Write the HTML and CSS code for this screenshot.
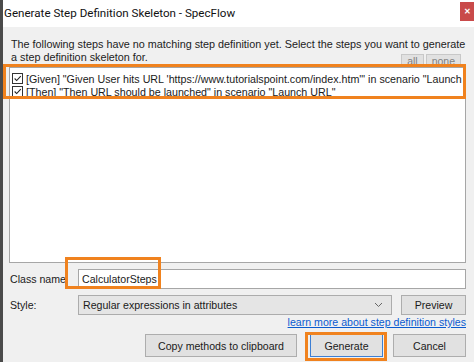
FILE: index.html
```html
<!DOCTYPE html>
<html>
<head>
<meta charset="utf-8">
<link rel="stylesheet" href="styles.css">
</head>
<body>
<div class="window">
  <div class="titlebar">
    <span class="title">Generate Step Definition Skeleton - SpecFlow</span>
    <span class="close">&#x2715;</span>
  </div>
  <div class="content">
    <p class="desc">The following steps have no matching step definition yet. Select the steps you want to generate<br>a step definition skeleton for.</p>
    <div class="selectors">
      <span class="mini-btn">all</span>
      <span class="mini-btn">none</span>
    </div>
    <div class="list-wrap">
      <div class="list">
        <div class="item"><span class="check"><svg viewBox="0 0 11 11" width="11" height="11"><path d="M2 5.5 L4.5 8 L9.5 2.5" fill="none" stroke="#222" stroke-width="1.3"/></svg></span><span>[Given] "Given User hits URL 'https://www.tutorialspoint.com/index.htm'" in scenario "Launch</span></div>
        <div class="item"><span class="check"><svg viewBox="0 0 11 11" width="11" height="11"><path d="M2 5.5 L4.5 8 L9.5 2.5" fill="none" stroke="#222" stroke-width="1.3"/></svg></span><span>[Then] "Then URL should be launched" in scenario "Launch URL"</span></div>
      </div>
      <div class="hl hl-list"></div>
    </div>
    <div class="row row-class">
      <label class="lbl">Class name</label>
      <div class="input">CalculatorSteps</div>
      <div class="hl hl-class"></div>
    </div>
    <div class="row row-style">
      <label class="lbl">Style:</label>
      <div class="combo"><span>Regular expressions in attributes</span><svg class="chev" viewBox="0 0 9 6" width="9" height="6"><path d="M1 1 L4.5 4.5 L8 1" fill="none" stroke="#666" stroke-width="1"/></svg></div>
      <div class="btn btn-preview">Preview</div>
    </div>
    <div class="link-row"><a class="link">learn more about step definition styles</a></div>
    <div class="actions">
      <div class="btn btn-copy">Copy methods to clipboard</div>
      <div class="gen-wrap">
        <div class="btn btn-gen">Generate</div>
        <div class="hl hl-gen"></div>
      </div>
      <div class="btn btn-cancel">Cancel</div>
    </div>
  </div>
</div>
</body>
</html>
```
FILE: styles.css
```css
* { box-sizing: border-box; }
html, body { margin: 0; padding: 0; }
body {
  width: 474px;
  height: 362px;
  overflow: hidden;
  font-family: "Liberation Sans", Arial, sans-serif;
  font-size: 10.6px;
  color: #1a1a1a;
  background: #f0f0f0;
}
.window {
  width: 474px;
  height: 362px;
  border-left: 3px solid #4b4b4b;
  display: flex;
  flex-direction: column;
}
.titlebar {
  height: 27px;
  background: #ffffff;
  display: flex;
  align-items: center;
  justify-content: space-between;
  padding-left: 1px;
}
.title {
  font-family: Roboto, "Noto Sans", sans-serif;
  font-size: 11.6px;
  color: #111;
  margin-top: -1px;
}
.close {
  width: 14px;
  height: 19px;
  margin-bottom: 4px;
  background: #c94a4a;
  color: #fff;
  font-size: 8px;
  display: flex;
  align-items: center;
  justify-content: center;
  font-weight: bold;
}
.content {
  flex: 1;
  background: #f0f0f0;
  padding: 11px 8px 0 6px;
  display: flex;
  flex-direction: column;
}
.desc {
  margin: 0;
  padding-left: 2px;
  line-height: 13px;
  color: #222;
  white-space: nowrap;
  font-size: 10.8px;
}
.selectors {
  display: flex;
  justify-content: flex-end;
  gap: 2px;
  margin-top: -10px;
  padding-right: 5px;
  height: 13px;
}
.mini-btn {
  display: block;
  height: 13px;
  padding: 0 5px;
  line-height: 13px;
  background: #e1e1e1;
  border: 1px solid #c8c8c8;
  border-bottom: none;
  color: #808080;
  font-size: 10.5px;
}
.list-wrap {
  position: relative;
}
.list {
  height: 196px;
  background: #ffffff;
  border: 1px solid #a6a6a6;
  padding: 4px 0 0 2px;
}
.item {
  display: flex;
  align-items: center;
  height: 13px;
  white-space: nowrap;
  overflow: hidden;
  color: #1a1a1a;
  font-size: 10.7px;
}
.check {
  width: 11px;
  height: 11px;
  border: 1px solid #333;
  background: #fff;
  margin-right: 3px;
  display: flex;
  align-items: center;
  justify-content: center;
  flex: none;
}
.check svg { width: 9px; height: 9px; }
.hl {
  position: absolute;
  border: 3px solid #f0821e;
  pointer-events: none;
}
.hl-list {
  left: -6px;
  top: -3px;
  width: 463px;
  height: 35px;
}
.row {
  display: flex;
  align-items: center;
  position: relative;
}
.row-class {
  margin-top: 6px;
  height: 20px;
}
.lbl {
  width: 69px;
  padding-left: 1px;
  flex: none;
}
.input {
  flex: 1;
  height: 20px;
  background: #fff;
  border: 1px solid #a6a6a6;
  padding: 3px 0 0 3px;
}
.hl-class {
  left: 56px;
  top: -12px;
  width: 96px;
  height: 32px;
}
.row-style {
  margin-top: 5px;
  height: 21px;
}
.combo {
  width: 314px;
  height: 20px;
  background: #e5e5e5;
  border: 1px solid #acacac;
  display: flex;
  align-items: center;
  justify-content: space-between;
  padding: 0 8px 0 4px;
}
.btn {
  background: #e1e1e1;
  border: 1px solid #adadad;
  display: flex;
  align-items: center;
  justify-content: center;
  color: #1a1a1a;
}
.btn-preview {
  margin-left: 9px;
  width: 65px;
  height: 20px;
}
.link-row {
  display: flex;
  justify-content: flex-end;
  height: 13px;
  margin-top: 1px;
}
.link {
  color: #0a5bd0;
  text-decoration: underline;
  line-height: 13px;
}
.actions {
  display: flex;
  justify-content: flex-end;
  margin-top: 5px;
  height: 23px;
}
.btn-copy {
  width: 152px;
  height: 23px;
}
.gen-wrap {
  position: relative;
  margin-left: 13px;
}
.btn-gen {
  width: 73px;
  height: 23px;
  border: 1px solid #3c7fd4;
}
.hl-gen {
  left: -5px;
  top: -2px;
  width: 82px;
  height: 29px;
}
.btn-cancel {
  margin-left: 10px;
  width: 73px;
  height: 23px;
}
```
